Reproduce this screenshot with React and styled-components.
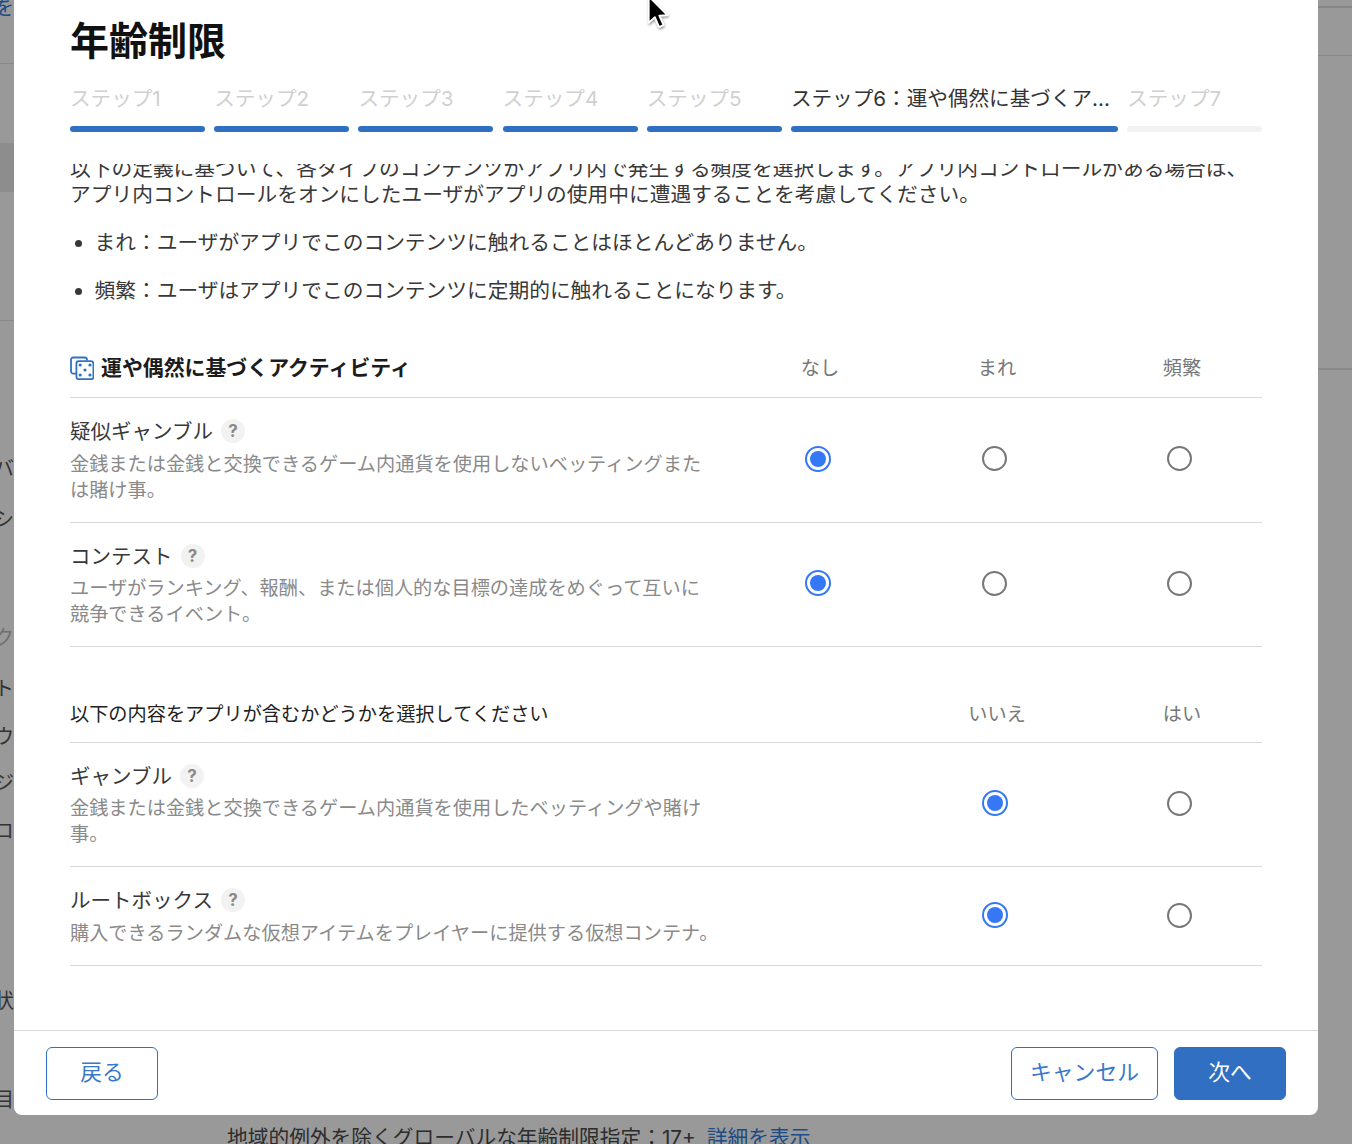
import React from "react";
import styled, { createGlobalStyle } from "styled-components";

const Global = createGlobalStyle`
  html, body { margin: 0; padding: 0; background: #999; }
  body { font-family: "Inter", "Noto Sans CJK JP", sans-serif; }
  * { box-sizing: border-box; }
`;

const Page = styled.div`
  position: relative;
  width: 1352px;
  height: 1144px;
  overflow: hidden;
  background: #999;
`;

const Backdrop = styled.div`
  display: grid;
  grid-template-columns: 14px 1fr 34px;
  width: 100%;
  height: 100%;
`;

const LeftRail = styled.div`
  display: flex;
  flex-direction: column;
  overflow: hidden;
  height: 100%;
`;

const RailBand = styled.div`
  height: ${(p) => p.$h}px;
  margin-top: ${(p) => p.$mt}px;
  background: ${(p) => p.$c};
  flex: none;
`;

const RailText = styled.div`
  flex: none;
  width: 14px;
  height: 26px;
  line-height: 26px;
  margin-top: ${(p) => p.$mt}px;
  font-size: 20px;
  white-space: nowrap;
  direction: rtl;
  color: ${(p) => p.$c || "#333"};
`;

const Middle = styled.div`
  display: flex;
  align-items: flex-end;
  padding-left: 213px;
  margin-bottom: -7px;
  font-size: 20.73px;
  line-height: 26px;
  color: #2c2c2c;
  white-space: nowrap;
`;

const BackLink = styled.span`
  color: #1d4b85;
  margin-left: 11px;
`;

const RightRail = styled.div`
  display: flex;
  flex-direction: column;
`;

const Modal = styled.div`
  position: absolute;
  left: 14px;
  top: 0;
  width: 1304px;
  height: 1115px;
  background: #fff;
  border-radius: 0 0 8px 8px;
  display: flex;
  flex-direction: column;
  overflow: hidden;
`;

const Head = styled.header`
  flex: none;
  height: 164px;
  padding: 14px 56px 0;
`;

const Title = styled.h1`
  margin: 0;
  font-size: 39px;
  line-height: 54px;
  font-weight: 700;
  color: #111;
`;

const Steps = styled.div`
  display: flex;
  gap: 9.2px;
  margin-top: 16px;
`;

const Step = styled.div`
  flex: none;
  width: ${(p) => (p.$wide ? 327 : 135)}px;
`;

const StepLabel = styled.div`
  height: 30px;
  line-height: 30px;
  font-size: 20.6px;
  white-space: nowrap;
  color: ${(p) => (p.$active ? "#333" : "#d0d0d0")};
`;

const StepBar = styled.div`
  height: 6px;
  margin-top: 12px;
  border-radius: 3px;
  background: ${(p) => (p.$done ? "#306fc2" : "#f2f2f2")};
`;

const Body = styled.main`
  flex: 1;
  min-height: 0;
  overflow: hidden;
  padding: 0 56px;
`;

const Scrolled = styled.div`
  margin-top: -8px;
`;

const Intro = styled.p`
  margin: 0;
  font-size: 20.73px;
  line-height: 26px;
  color: #383838;
  white-space: nowrap;
`;

const Bullets = styled.ul`
  margin: 22px 0 0;
  padding: 0 0 0 24.5px;
  font-size: 20.73px;
  line-height: 26px;
  color: #383838;
  list-style: disc;
  & > li + li { margin-top: 22px; }
`;

const TableHead = styled.div`
  display: grid;
  grid-template-columns: 678px 144px 210px 160px;
  align-items: center;
  height: ${(p) => p.$h}px;
  margin-top: ${(p) => p.$mt}px;
  padding-bottom: 2px;
  border-bottom: 1px solid #d8d8d8;
`;

const SectionTitle = styled.div`
  display: flex;
  align-items: center;
  gap: 7px;
  font-size: 20.9px;
  font-weight: 700;
  color: #1c1c1c;
  white-space: nowrap;
`;

const DiceSvg = styled.svg`
  flex: none;
  width: 24px;
  height: 24px;
  margin-top: 4px;
`;

const Question = styled.div`
  margin-top: 2px;
  font-size: 19.2px;
  color: #222;
  white-space: nowrap;
`;

const ColName = styled.div`
  margin-top: 2px;
  text-align: center;
  font-size: 19.2px;
  color: #777;
`;

const Row = styled.div`
  display: grid;
  grid-template-columns: 678px 144px 210px 160px;
  align-items: center;
  padding: 19px 0 19.2px;
  border-bottom: 1px solid #d8d8d8;
`;

const RowText = styled.div`
  min-width: 0;
`;

const RowTitle = styled.div`
  display: flex;
  align-items: center;
  gap: 8px;
  height: 26px;
  font-size: 20.5px;
  color: #383838;
  white-space: nowrap;
`;

const Help = styled.span`
  display: inline-flex;
  align-items: center;
  justify-content: center;
  width: 24px;
  height: 24px;
  margin-top: 2px;
  border-radius: 50%;
  background: #f2f2f2;
  color: #8a8a8a;
  font-size: 17px;
  font-weight: 700;
`;

const Desc = styled.div`
  margin-top: 7.5px;
  font-size: 19.2px;
  line-height: 26px;
  color: #8a8a8a;
  white-space: nowrap;
`;

const RadioCell = styled.div`
  display: flex;
  justify-content: center;
  padding-right: 5px;
  margin-bottom: 2px;
`;

const Radio = styled.span`
  position: relative;
  display: block;
  width: ${(p) => (p.$on ? 26 : 25)}px;
  height: ${(p) => (p.$on ? 26 : 25)}px;
  border-radius: 50%;
  border: 2px solid ${(p) => (p.$on ? "#3478f6" : "#777")};
  background: #fff;
  &::after {
    content: "";
    display: ${(p) => (p.$on ? "block" : "none")};
    position: absolute;
    inset: 3px;
    border-radius: 50%;
    background: #3478f6;
  }
`;

const Foot = styled.footer`
  flex: none;
  height: 85px;
  border-top: 1px solid #d8d8d8;
  display: flex;
  align-items: flex-start;
  gap: 16px;
  padding: 16px 32px 0;
`;

const Button = styled.button`
  height: 53px;
  width: ${(p) => p.$w}px;
  margin-right: ${(p) => (p.$push ? "auto" : 0)};
  padding: 0 0 6px;
  border: 1px solid #306fc2;
  border-radius: 6px;
  background: ${(p) => (p.$primary ? "#306fc2" : "#fff")};
  color: ${(p) => (p.$primary ? "#fff" : "#3a78c9")};
  font-family: inherit;
  font-size: 21.8px;
`;

const Cursor = styled.svg`
  position: absolute;
  left: 640px;
  top: -6px;
  width: 35px;
  height: 44px;
  overflow: visible;
`;

const stepNames = ["ステップ1", "ステップ2", "ステップ3", "ステップ4", "ステップ5"];

function DiceIcon() {
  return (
    <DiceSvg viewBox="0 0 24 24" fill="none" stroke="#3071c4" strokeWidth="1.8">
      <path d="M17 4.5 V3.6 A2.4 2.4 0 0 0 14.6 1.5 H3.4 A2.4 2.4 0 0 0 1 3.9 V15.2 A2.4 2.4 0 0 0 3.4 17.6 H6" />
      <rect x="6.4" y="5.2" width="17" height="18" rx="2.4" />
      <g fill="#3071c4" stroke="none">
        <circle cx="10.2" cy="9" r="1.6" />
        <circle cx="20" cy="9" r="1.6" />
        <circle cx="15" cy="14" r="1.6" />
        <circle cx="10.2" cy="19" r="1.6" />
        <circle cx="20" cy="19" r="1.6" />
      </g>
    </DiceSvg>
  );
}

function ContentRow({ title, children, on, three }) {
  return (
    <Row>
      <RowText>
        <RowTitle>
          {title}
          <Help>?</Help>
        </RowTitle>
        <Desc>{children}</Desc>
      </RowText>
      {three ? (
        <RadioCell>
          <Radio $on={on === 0} />
        </RadioCell>
      ) : (
        <span />
      )}
      <RadioCell>
        <Radio $on={on === 1} />
      </RadioCell>
      <RadioCell>
        <Radio $on={on === 2} />
      </RadioCell>
    </Row>
  );
}

export default function App() {
  return (
    <Page>
      <Global />
      <Backdrop>
        <LeftRail>
          <RailText $mt={-5} $c="#1d4b85">を</RailText>
          <RailBand $mt={42} $h={1} $c="#888" />
          <RailBand $mt={79} $h={49} $c="#8d8d8d" />
          <RailBand $mt={128} $h={1} $c="#8a8a8a" />
          <RailText $mt={135}>バ</RailText>
          <RailText $mt={25}>シ</RailText>
          <RailText $mt={92} $c="#6f6f6f">ク</RailText>
          <RailText $mt={25}>ト</RailText>
          <RailText $mt={22}>ウ</RailText>
          <RailText $mt={20}>ジ</RailText>
          <RailText $mt={22}>コ</RailText>
          <RailText $mt={144}>状</RailText>
          <RailText $mt={73}>目</RailText>
        </LeftRail>
        <Middle>
          地域的例外を除くグローバルな年齢制限指定：17+
          <BackLink>詳細を表示</BackLink>
        </Middle>
        <RightRail>
          <RailBand $mt={6} $h={2} $c="#868686" />
          <RailBand $mt={47} $h={1} $c="#8a8a8a" />
          <RailBand $mt={312} $h={2} $c="#8a8a8a" />
        </RightRail>
      </Backdrop>

      <Modal>
        <Head>
          <Title>年齢制限</Title>
          <Steps>
            {stepNames.map((s) => (
              <Step key={s}>
                <StepLabel>{s}</StepLabel>
                <StepBar $done />
              </Step>
            ))}
            <Step $wide>
              <StepLabel $active>ステップ6：運や偶然に基づくア...</StepLabel>
              <StepBar $done />
            </Step>
            <Step>
              <StepLabel>ステップ7</StepLabel>
              <StepBar />
            </Step>
          </Steps>
        </Head>

        <Body>
          <Scrolled>
            <Intro>
              以下の定義に基づいて、各タイプのコンテンツがアプリ内で発生する頻度を選択します。アプリ内コントロールがある場合は、
              <br />
              アプリ内コントロールをオンにしたユーザがアプリの使用中に遭遇することを考慮してください。
            </Intro>
            <Bullets>
              <li>まれ：ユーザがアプリでこのコンテンツに触れることはほとんどありません。</li>
              <li>頻繁：ユーザはアプリでこのコンテンツに定期的に触れることになります。</li>
            </Bullets>

            <TableHead $mt={33} $h={61}>
              <SectionTitle>
                <DiceIcon />
                運や偶然に基づくアクティビティ
              </SectionTitle>
              <ColName>なし</ColName>
              <ColName>まれ</ColName>
              <ColName>頻繁</ColName>
            </TableHead>
            <ContentRow three on={0} title="疑似ギャンブル">
              金銭または金銭と交換できるゲーム内通貨を使用しないベッティングまた
              <br />
              は賭け事。
            </ContentRow>
            <ContentRow three on={0} title="コンテスト">
              ユーザがランキング、報酬、または個人的な目標の達成をめぐって互いに
              <br />
              競争できるイベント。
            </ContentRow>

            <TableHead $mt={38} $h={57.2}>
              <Question>以下の内容をアプリが含むかどうかを選択してください</Question>
              <span />
              <ColName>いいえ</ColName>
              <ColName>はい</ColName>
            </TableHead>
            <ContentRow on={1} title="ギャンブル">
              金銭または金銭と交換できるゲーム内通貨を使用したベッティングや賭け
              <br />
              事。
            </ContentRow>
            <ContentRow on={1} title="ルートボックス">
              購入できるランダムな仮想アイテムをプレイヤーに提供する仮想コンテナ。
            </ContentRow>
          </Scrolled>
        </Body>

        <Foot>
          <Button $w={112} $push>戻る</Button>
          <Button $w={147}>キャンセル</Button>
          <Button $w={112} $primary>次へ</Button>
        </Foot>
      </Modal>

      <Cursor viewBox="0 0 32 40">
        <defs>
          <filter id="cursor-shadow" x="-40%" y="-40%" width="180%" height="180%">
            <feDropShadow dx="0.5" dy="1.5" stdDeviation="1" floodColor="#000" floodOpacity="0.45" />
          </filter>
        </defs>
        <path
          d="M8 2 L8 26 L13.6 21 L17.4 30 L21.4 28.2 L17.6 19.6 L25 19.2 Z"
          fill="#000"
          stroke="#fff"
          strokeWidth="1.6"
          strokeLinejoin="round"
          filter="url(#cursor-shadow)"
        />
      </Cursor>
    </Page>
  );
}
